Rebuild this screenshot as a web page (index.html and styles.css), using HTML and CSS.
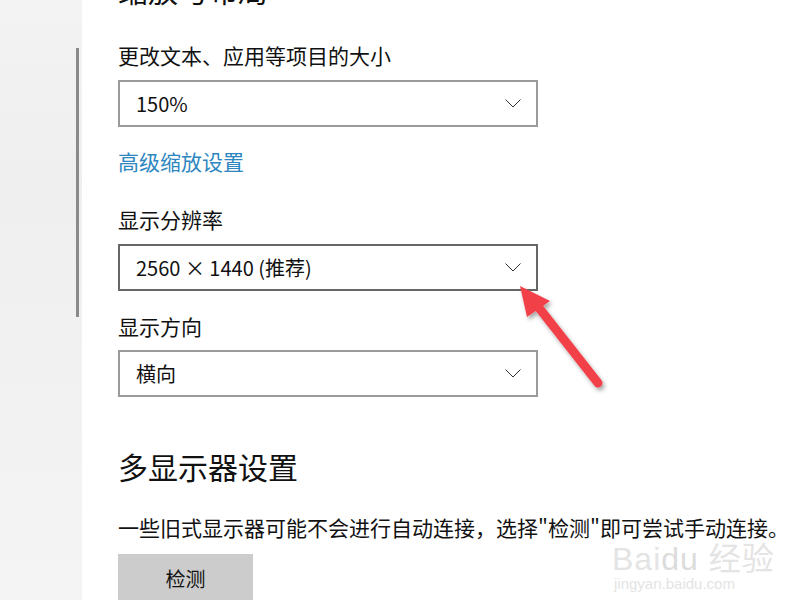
FILE: index.html
```html
<!DOCTYPE html>
<html lang="zh-CN">
<head>
    <meta charset="UTF-8">
    <title>显示设置</title>
    <link rel="stylesheet" href="styles.css">
</head>
<body>

<div class="window">
    <div class="sidebar">
        <div class="scrollbar"></div>
    </div>

    <div class="content">
        <h2 class="section-title top">缩放与布局</h2>

        <div class="label first">更改文本、应用等项目的大小</div>
        <div class="dropdown">
            <span>150%</span>
            <svg class="chevron" width="16" height="9" viewBox="0 0 16 9"><path d="M0.5 0.5 L8 8 L15.5 0.5" fill="none" stroke="#333" stroke-width="1"/></svg>
        </div>

        <a class="link" href="#">高级缩放设置</a>

        <div class="label">显示分辨率</div>
        <div class="dropdown active">
            <span>2560 × 1440 (推荐)</span>
            <svg class="chevron" width="16" height="9" viewBox="0 0 16 9"><path d="M0.5 0.5 L8 8 L15.5 0.5" fill="none" stroke="#333" stroke-width="1"/></svg>
        </div>

        <div class="label tight">显示方向</div>
        <div class="dropdown">
            <span>横向</span>
            <svg class="chevron" width="16" height="9" viewBox="0 0 16 9"><path d="M0.5 0.5 L8 8 L15.5 0.5" fill="none" stroke="#333" stroke-width="1"/></svg>
        </div>

        <h2 class="section-title multi">多显示器设置</h2>
        <p class="desc">一些旧式显示器可能不会进行自动连接，选择"检测"即可尝试手动连接。</p>
        <button class="detect">检测</button>
    </div>
</div>

<!-- red annotation arrow drawn over the screenshot -->
<svg class="arrow" width="801" height="600" viewBox="0 0 801 600">
    <defs>
        <filter id="shadow" x="-20%" y="-20%" width="140%" height="140%">
            <feDropShadow dx="2" dy="3" stdDeviation="2" flood-color="#000" flood-opacity="0.35"/>
        </filter>
    </defs>
    <g filter="url(#shadow)">
        <line x1="598" y1="383" x2="536" y2="304" stroke="#f2404a" stroke-width="9" stroke-linecap="round"/>
        <polygon points="520,286 550,301 527,317" fill="#f2404a"/>
    </g>
</svg>

<div class="watermark">
    <div class="wm-logo">Bai<span class="wm-du">du</span> 经验</div>
    <div class="wm-url">jingyan.baidu.com</div>
</div>

</body>
</html>
```

FILE: styles.css
```css
body {
    margin: 0;
    padding: 0;
    width: 801px;
    height: 600px;
    overflow: hidden;
    background-color: #fff;
    font-family: "Noto Sans CJK SC", "Microsoft YaHei", sans-serif;
    color: #111;
    position: relative;
}
.window {
    display: flex;
    height: 600px;
}
.sidebar {
    width: 82px;
    flex-shrink: 0;
    background: linear-gradient(180deg, #f3f3f3 0%, #efefef 30%, #f4f4f4 100%);
    padding-top: 48px;
    box-sizing: border-box;
}
.scrollbar {
    width: 3px;
    height: 269px;
    margin-left: 76px;
    background-color: #8a8a8a;
}
.content {
    flex: 1;
    padding-left: 36px;
}
.section-title {
    font-size: 30px;
    font-weight: 400;
    line-height: 40px;
    margin: 0;
}
.section-title.top {
    margin-top: -31px;
}
.section-title.multi {
    margin-top: 49px;
}
.label {
    font-size: 21px;
    line-height: 28px;
    margin-top: 30px;
    margin-bottom: 11px;
}
.label.first {
    margin-top: 32px;
}
.label.tight {
    margin-top: 21px;
    margin-bottom: 10px;
}
.dropdown {
    width: 420px;
    height: 47px;
    box-sizing: border-box;
    border: 2px solid #9a9a9a;
    display: flex;
    align-items: center;
    justify-content: space-between;
    padding: 0 15px 0 16px;
    font-size: 20px;
}
.dropdown.active {
    border-color: #666;
}
.chevron {
    display: block;
}
.link {
    display: block;
    margin-top: 20px;
    font-size: 21px;
    line-height: 28px;
    color: #2d86c0;
    text-decoration: none;
}
.desc {
    font-size: 21px;
    line-height: 28px;
    margin: 27px 0 13px 0;
    white-space: nowrap;
}
.detect {
    width: 135px;
    height: 48px;
    border: none;
    background-color: #cccccc;
    font-family: inherit;
    font-size: 20px;
    color: #111;
    padding: 0;
}
.arrow {
    position: absolute;
    left: 0;
    top: 0;
    pointer-events: none;
}
.watermark {
    position: absolute;
    left: 612px;
    top: 543px;
    color: #e4e4e4;
    font-family: "Liberation Sans", "Noto Sans CJK SC", sans-serif;
    pointer-events: none;
}
.wm-logo {
    font-size: 32px;
    line-height: 32px;
    letter-spacing: 1px;
}
.wm-du {
    color: #dcdcdc;
}
.wm-url {
    font-size: 15px;
    line-height: 18px;
    margin-left: 2px;
}
```
